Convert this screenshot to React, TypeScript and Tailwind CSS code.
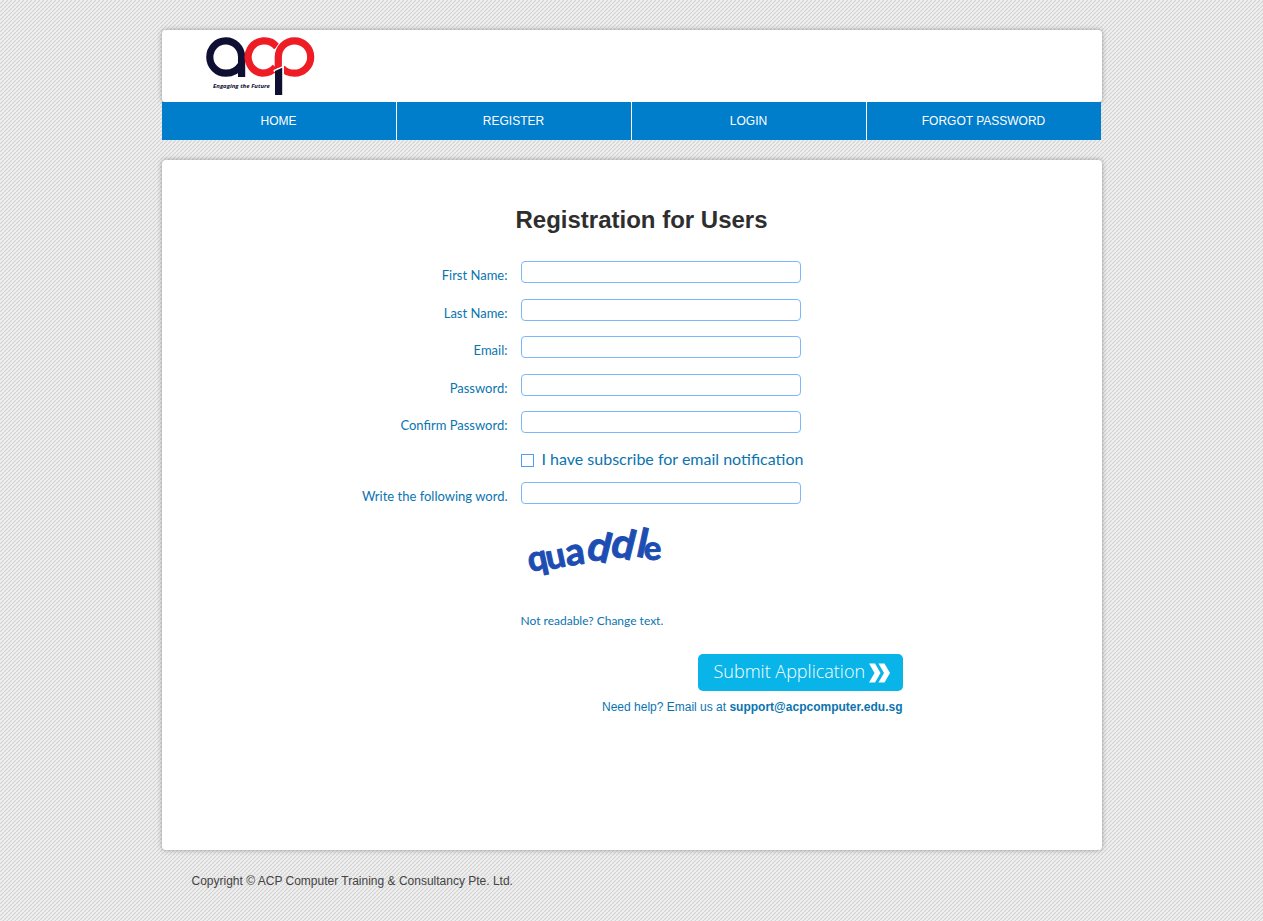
import React from "react";

const links = ["HOME", "REGISTER", "LOGIN", "FORGOT PASSWORD"];

const fields = [
  { id: "first-name", label: "First Name:", type: "text" },
  { id: "last-name", label: "Last Name:", type: "text" },
  { id: "email", label: "Email:", type: "email" },
  { id: "password", label: "Password:", type: "password" },
  { id: "confirm-password", label: "Confirm Password:", type: "password" },
];

const inputClass =
  "block h-[22px] w-full rounded border border-[#7ab8fb] bg-white px-2 text-sm text-gray-700 outline-none";
const rowClass = "grid grid-cols-[346px_minmax(0,280px)] items-center gap-x-[13px]";
const labelClass =
  "pt-1.5 text-right font-['Lato',sans-serif] text-[13px] leading-[14px] text-[#0a74b0]";

function Logo() {
  return (
    <svg viewBox="0 0 112 62" className="h-[62px] w-28" role="img" aria-label="ACP, Engaging the Future">
      <g fill="none" strokeWidth="7.2">
        <path d="M37.6 42 V22 A15.9 16.2 0 1 0 22 38.2 C28 38.2 33 36 37 30" stroke="#0e0f33" />
        <path d="M73 12 A16.2 16.2 0 1 0 58.5 38.2 C64 38.2 68 36.5 71.5 32" stroke="#ee1d25" />
        <path d="M74.3 26 V22 A16.2 16.2 0 0 1 82 8.2" stroke="#fff" strokeWidth="8.8" />
        <path d="M74.3 33 V22 A16.2 16.2 0 1 1 90.5 38.2 C85 38.2 81 36.5 78 33" stroke="#ee1d25" />
      </g>
      <path d="M69.5 35 L80 30.4 V62 H71 V37 L69.5 36.5 Z" fill="#fff" />
      <path d="M71 36 L78.2 32.7 V60 H71 Z" fill="#0e0f33" />
      <text
        x="9"
        y="53"
        fill="#0e0f33"
        fontFamily="Open Sans, sans-serif"
        fontSize="6"
        fontStyle="italic"
        fontWeight="700"
      >
        Engaging the Future
      </text>
    </svg>
  );
}

const captcha = [
  { c: "q", x: 9, y: 54, r: -12, s: 35 },
  { c: "u", x: 27, y: 52, r: -12, s: 35 },
  { c: "a", x: 46, y: 48, r: -8, s: 38 },
  { c: "d", x: 64, y: 40, r: 14, s: 41 },
  { c: "d", x: 88, y: 37, r: 14, s: 41 },
  { c: "l", x: 114, y: 38, r: 12, s: 40 },
  { c: "e", x: 123, y: 42, r: -2, s: 33 },
];

function Captcha() {
  return (
    <svg viewBox="0 0 150 76" className="h-[76px] w-[150px] overflow-visible" role="img" aria-label="quaddle">
      <g
        fill="#1d4db3"
        stroke="#1d4db3"
        strokeWidth="1"
        strokeLinejoin="round"
        fontFamily="Lato, sans-serif"
        fontWeight="700"
      >
        {captcha.map((g, i) => (
          <text key={i} x={g.x} y={g.y} fontSize={g.s} transform={`rotate(${g.r} ${g.x} ${g.y})`}>
            {g.c}
          </text>
        ))}
      </g>
    </svg>
  );
}

export default function App() {
  return (
    <div className="min-h-screen bg-[#ededed] bg-[linear-gradient(135deg,#efefef_32%,#d4d4d4_50%,#efefef_68%)] bg-[length:4px_4px] px-4 py-[30px] font-['Liberation_Sans',Arial,sans-serif]">
      <div className="mx-auto max-w-[940px]">
        <header>
          <div className="h-[72px] rounded bg-white pt-[5px] pl-[42px] shadow-[0_0_5px_rgba(0,0,0,0.35)]">
            <Logo />
          </div>
          <nav className="relative mr-px grid grid-cols-4 gap-px bg-white">
            {links.map((l) => (
              <a
                key={l}
                href="#"
                className="flex h-[38px] items-center justify-center bg-[#007dcb] text-xs text-white"
              >
                {l}
              </a>
            ))}
          </nav>
        </header>

        <main className="mt-5 min-h-[690px] rounded bg-white pt-11 pb-10 shadow-[0_0_5px_rgba(0,0,0,0.35)]">
          <h1 className="pl-5 text-center text-2xl leading-8 font-bold text-[#2e2e2e]">
            Registration for Users
          </h1>
          <form className="mt-[25px]" onSubmit={(e) => e.preventDefault()}>
            <div className="flex h-[172px] flex-col justify-between">
              {fields.map((f) => (
                <div key={f.id} className={rowClass}>
                  <label htmlFor={f.id} className={labelClass}>
                    {f.label}
                  </label>
                  <input id={f.id} type={f.type} className={inputClass} />
                </div>
              ))}
            </div>
            <div className="mt-[14px] ml-[359px] flex h-6 items-center gap-2">
              <input
                id="subscribe"
                type="checkbox"
                className="mt-0.5 size-[13px] appearance-none border border-[#4a9ffb] bg-white checked:bg-[#4a9ffb]"
              />
              <label
                htmlFor="subscribe"
                className="font-['Lato',sans-serif] text-base leading-6 whitespace-nowrap text-[#0a74b0]"
              >
                I have subscribe for email notification
              </label>
            </div>
            <div className={`mt-[11px] ${rowClass}`}>
              <label htmlFor="word" className={labelClass}>
                Write the following word.
              </label>
              <input id="word" type="text" className={inputClass} />
            </div>
            <div className="mt-[14px] ml-[359px]">
              <Captcha />
              <a
                href="#"
                className="mt-[18px] inline-block font-['Lato',sans-serif] text-xs leading-[18px] text-[#0a74b0]"
              >
                Not readable? Change text.
              </a>
            </div>
            <div className="mt-[22px] mr-[199px] flex flex-col items-end">
              <button
                type="submit"
                className="flex h-[37px] w-[205px] items-center gap-1 rounded-[5px] bg-[#08b4e8] pl-4 font-['Open_Sans',sans-serif] text-lg font-light whitespace-nowrap text-white"
              >
                <span className="pb-1">Submit Application</span>
                <svg viewBox="0 0 22 20" className="h-5 w-[22px]" fill="#fff" aria-hidden="true">
                  <path d="M0 0.5 H6 L11.5 10 L6 19.5 H0 L5.5 10 Z" />
                  <path d="M9.5 0.5 H15.5 L21 10 L15.5 19.5 H9.5 L15 10 Z" />
                </svg>
              </button>
              <p className="mt-2 text-[12px] leading-4 text-[#0a74b0]">
                Need help? Email us at{" "}
                <a href="#" className="font-bold">
                  support@acpcomputer.edu.sg
                </a>
              </p>
            </div>
          </form>
        </main>

        <footer className="mt-[22px] pl-[30px] text-xs leading-[18px] text-[#444]">
          Copyright © ACP Computer Training &amp; Consultancy Pte. Ltd.
        </footer>
      </div>
    </div>
  );
}
